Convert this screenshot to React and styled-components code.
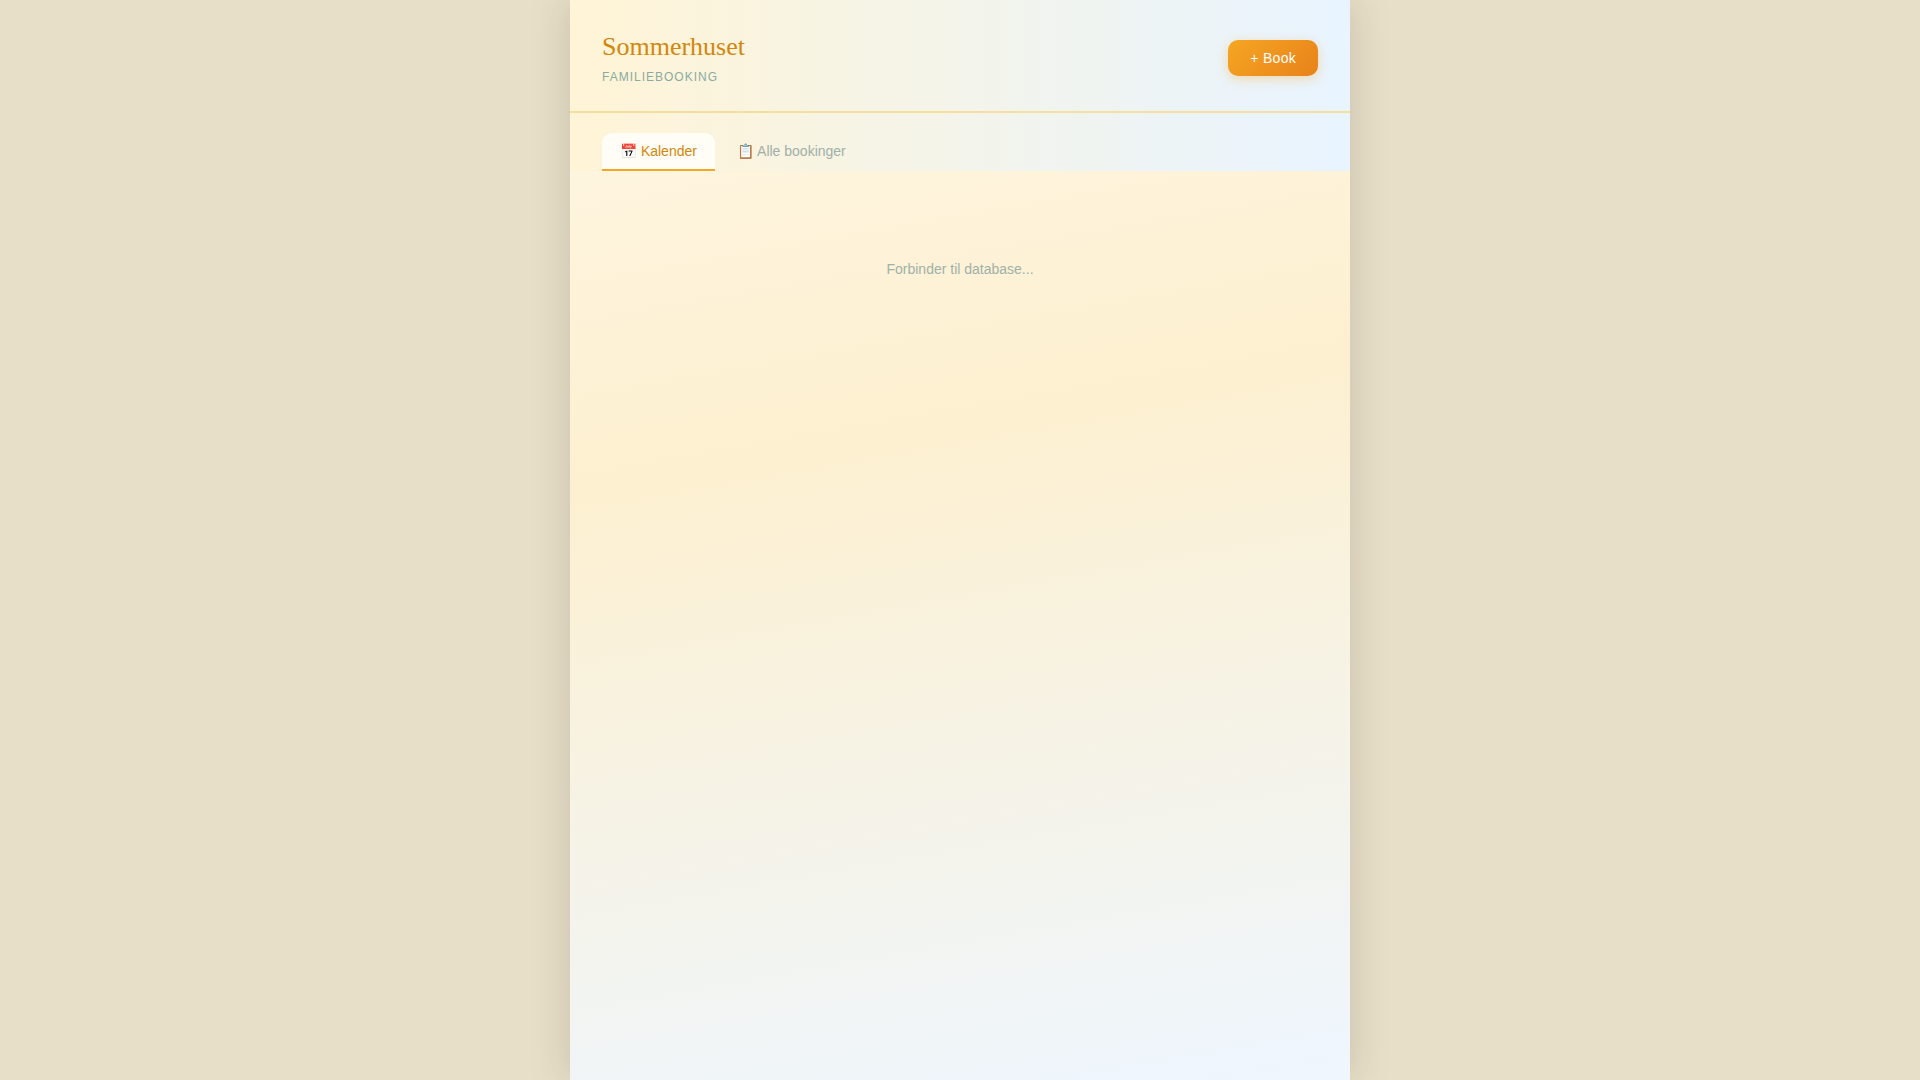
import { useState } from "react";
import styled, { createGlobalStyle } from "styled-components";

const GlobalStyle = createGlobalStyle`
    * {
        box-sizing: border-box;
    }

    body {
        margin: 0;
        background: #e8dfc8;
        font-family: "Liberation Sans", Arial, sans-serif;
    }
`;

const Page = styled.div`
    max-width: 780px;
    min-height: 100vh;
    margin: 0 auto;
    background: linear-gradient(170deg, #fff8e7 0%, #fdf0d0 40%, #eef6ff 100%);
    box-shadow: 0 0 40px rgba(0, 0, 0, 0.15);
`;

const Header = styled.header`
    display: flex;
    justify-content: space-between;
    align-items: center;
    padding: 28px 32px 23px;
    background: linear-gradient(90deg, #fff4d6, #e8f4ff);
    border-bottom: 2px solid #f5dfa0;
`;

const Title = styled.h1`
    margin: 0;
    color: #d4860b;
    font-family: "Liberation Serif", "Times New Roman", serif;
    font-weight: 400;
    font-size: 26px;
    line-height: 38px;
`;

const Subtitle = styled.p`
    margin: 0;
    color: #8aab9e;
    font-size: 12px;
    line-height: 22px;
    letter-spacing: 1px;
    text-transform: uppercase;
`;

const BookButton = styled.button`
    padding: 10px 22px;
    border: none;
    border-radius: 10px;
    background: linear-gradient(135deg, #f5a623, #e8821a);
    box-shadow: 0 3px 12px rgba(245, 166, 35, 0.35);
    color: #ffffff;
    font-family: inherit;
    font-size: 14px;
    line-height: 16px;
    letter-spacing: 0.02em;
    cursor: pointer;
`;

const Tabs = styled.nav`
    display: flex;
    gap: 4px;
    padding: 20px 32px 0;
    background: linear-gradient(90deg, #fff4d6, #e8f4ff);
`;

const Tab = styled.button`
    padding: 10px 18px;
    border: none;
    border-bottom: 2px solid ${({ $active }) => ($active ? "#f5a623" : "transparent")};
    border-radius: 10px 10px 0 0;
    background: ${({ $active }) => ($active ? "#fffdf5" : "transparent")};
    color: ${({ $active }) => ($active ? "#d4860b" : "#a0b0a8")};
    font-family: inherit;
    font-size: 14px;
    line-height: 16px;
    cursor: pointer;
`;

const Content = styled.main`
    padding: 88px 32px;
`;

const Loading = styled.p`
    margin: 0;
    color: #a0b0a8;
    font-size: 14px;
    line-height: 20px;
    text-align: center;
`;

const tabs = [
    { id: "calendar", label: "📅 Kalender" },
    { id: "list", label: "📋 Alle bookinger" },
];

const App = () => {
    const [view, setView] = useState("calendar");

    return (
        <Page>
            <GlobalStyle />
            <Header>
                <div>
                    <Title>Sommerhuset</Title>
                    <Subtitle>Familiebooking</Subtitle>
                </div>
                <BookButton type="button">+ Book</BookButton>
            </Header>

            <Tabs>
                {tabs.map((tab) => (
                    <Tab key={tab.id} type="button" $active={view === tab.id} onClick={() => setView(tab.id)}>
                        {tab.label}
                    </Tab>
                ))}
            </Tabs>

            <Content>
                <Loading>Forbinder til database...</Loading>
            </Content>
        </Page>
    );
};

export default App;
